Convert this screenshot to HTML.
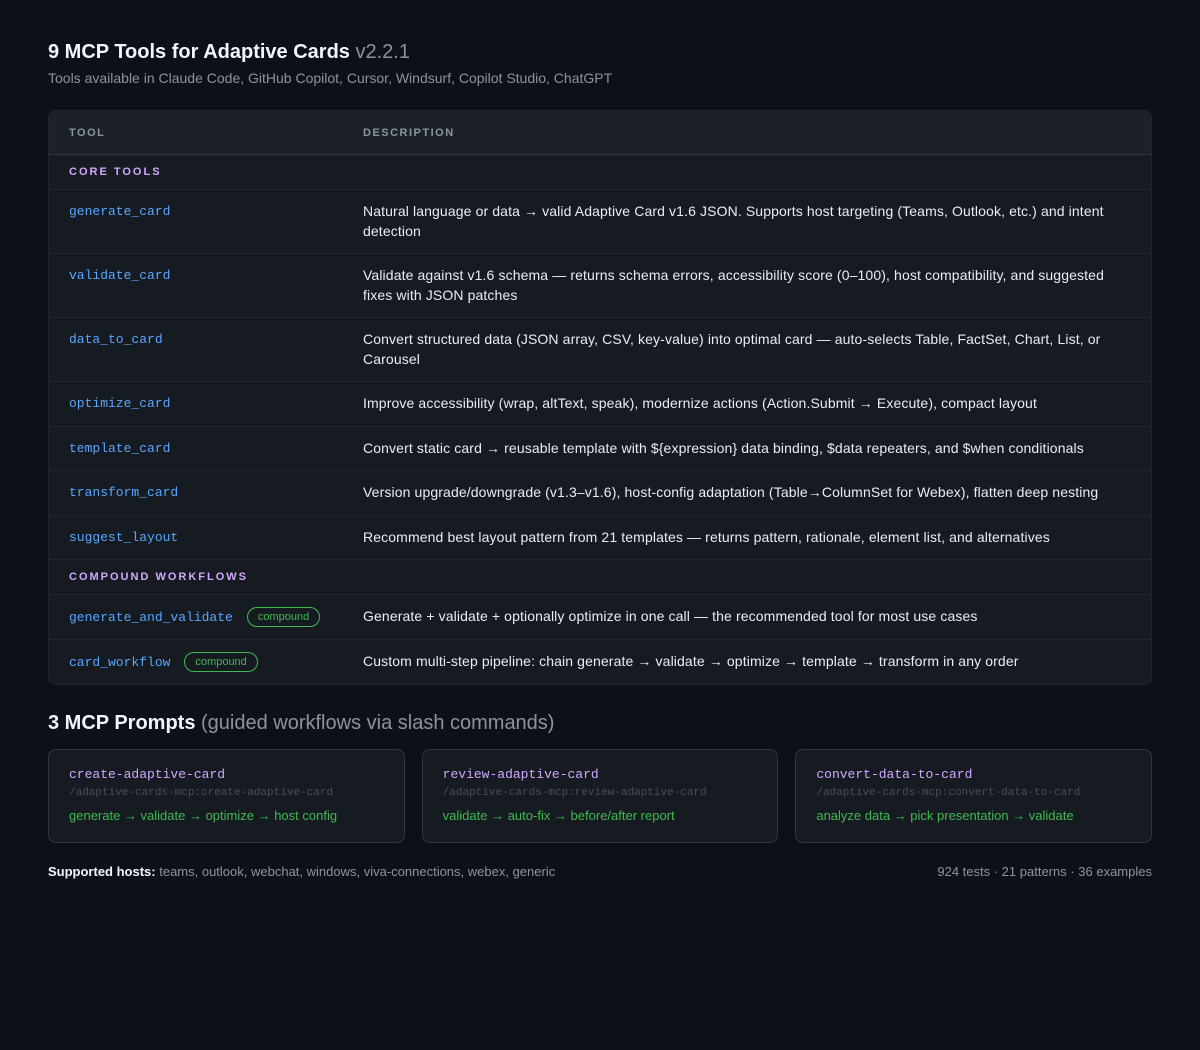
<!DOCTYPE html>
<html><head><meta charset="utf-8"><style>
*{box-sizing:border-box;margin:0;padding:0}
body{width:1200px;height:1050px;background:#0d1117;font-family:"Liberation Sans",sans-serif;color:#e6edf3;padding:40px 48px}
h1{font-size:20px;font-weight:bold;line-height:24px;color:#f0f6fc}
h1 span,h2 span{font-weight:normal;color:#8b949e}
.sub{font-size:14px;color:#8b949e;margin-top:6px;line-height:16px}
table{margin-top:24px;width:1104px;border-collapse:separate;border-spacing:0;background:#161b22;border:1px solid #21262d;border-radius:8px;overflow:hidden}
th{background:#1c2128;height:44px;text-align:left;font-size:11px;letter-spacing:1.5px;color:#8b949e;padding:0 20px;border-bottom:1px solid #30363d}
td{padding:12px 20px 12px;font-size:14px;line-height:19.5px;border-bottom:1px solid #21262d;vertical-align:top;color:#e6edf3;letter-spacing:0.12px}
tr:last-child td{border-bottom:none}
td.t{width:294px;font-family:"Liberation Mono",monospace;font-size:13px;color:#58a6ff;line-height:18px;padding-top:13px;letter-spacing:0}
td.sec{font-size:11px;font-weight:bold;letter-spacing:2px;color:#d2a8ff;padding:11px 20px 10px;line-height:13px}
td.c2{padding-top:12px;padding-bottom:12px}
.b{display:inline-block;margin-left:14px;border:1px solid #3fb950;color:#3fb950;border-radius:10px;font-family:"Liberation Sans",sans-serif;font-size:11px;padding:2px 10px;line-height:14px;vertical-align:1px}
h2{font-size:20px;font-weight:bold;margin-top:26px;line-height:24px;color:#f0f6fc}
.cards{display:flex;gap:17px;margin-top:14px}
.c{flex:1;height:94px;border:1px solid #30363d;border-radius:8px;background:#161b22;padding:16px 20px}
.c .n{font-family:"Liberation Mono",monospace;font-size:13px;color:#d2a8ff;line-height:17px}
.c .p{font-family:"Liberation Mono",monospace;font-size:11px;color:#484f58;margin-top:3px;line-height:14px}
.c .f{font-size:13px;color:#3fb950;margin-top:8px;line-height:16px}
.foot{display:flex;justify-content:space-between;margin-top:21px;font-size:13px;color:#8b949e}
.foot b{color:#f0f6fc}
</style></head><body>
<h1>9 MCP Tools for Adaptive Cards <span>v2.2.1</span></h1>
<div class="sub">Tools available in Claude Code, GitHub Copilot, Cursor, Windsurf, Copilot Studio, ChatGPT</div>
<table>
<tr><th>TOOL</th><th>DESCRIPTION</th></tr>
<tr><td class="sec" colspan="2">CORE TOOLS</td></tr>
<tr><td class="t">generate_card</td><td>Natural language or data → valid Adaptive Card v1.6 JSON. Supports host targeting (Teams, Outlook, etc.) and intent detection</td></tr>
<tr><td class="t">validate_card</td><td>Validate against v1.6 schema — returns schema errors, accessibility score (0–100), host compatibility, and suggested fixes with JSON patches</td></tr>
<tr><td class="t">data_to_card</td><td>Convert structured data (JSON array, CSV, key-value) into optimal card — auto-selects Table, FactSet, Chart, List, or Carousel</td></tr>
<tr><td class="t">optimize_card</td><td>Improve accessibility (wrap, altText, speak), modernize actions (Action.Submit → Execute), compact layout</td></tr>
<tr><td class="t">template_card</td><td>Convert static card → reusable template with ${expression} data binding, $data repeaters, and $when conditionals</td></tr>
<tr><td class="t">transform_card</td><td>Version upgrade/downgrade (v1.3–v1.6), host-config adaptation (Table→ColumnSet for Webex), flatten deep nesting</td></tr>
<tr><td class="t">suggest_layout</td><td>Recommend best layout pattern from 21 templates — returns pattern, rationale, element list, and alternatives</td></tr>
<tr><td class="sec" colspan="2">COMPOUND WORKFLOWS</td></tr>
<tr><td class="t c2">generate_and_validate<span class="b">compound</span></td><td class="c2">Generate + validate + optionally optimize in one call — the recommended tool for most use cases</td></tr>
<tr><td class="t c2">card_workflow<span class="b">compound</span></td><td class="c2">Custom multi-step pipeline: chain generate → validate → optimize → template → transform in any order</td></tr>
</table>
<h2>3 MCP Prompts <span>(guided workflows via slash commands)</span></h2>
<div class="cards">
<div class="c"><div class="n">create-adaptive-card</div><div class="p">/adaptive-cards-mcp:create-adaptive-card</div><div class="f">generate → validate → optimize → host config</div></div>
<div class="c"><div class="n">review-adaptive-card</div><div class="p">/adaptive-cards-mcp:review-adaptive-card</div><div class="f">validate → auto-fix → before/after report</div></div>
<div class="c"><div class="n">convert-data-to-card</div><div class="p">/adaptive-cards-mcp:convert-data-to-card</div><div class="f">analyze data → pick presentation → validate</div></div>
</div>
<div class="foot"><div><b>Supported hosts:</b> teams, outlook, webchat, windows, viva-connections, webex, generic</div><div>924 tests · 21 patterns · 36 examples</div></div>
</body></html>
